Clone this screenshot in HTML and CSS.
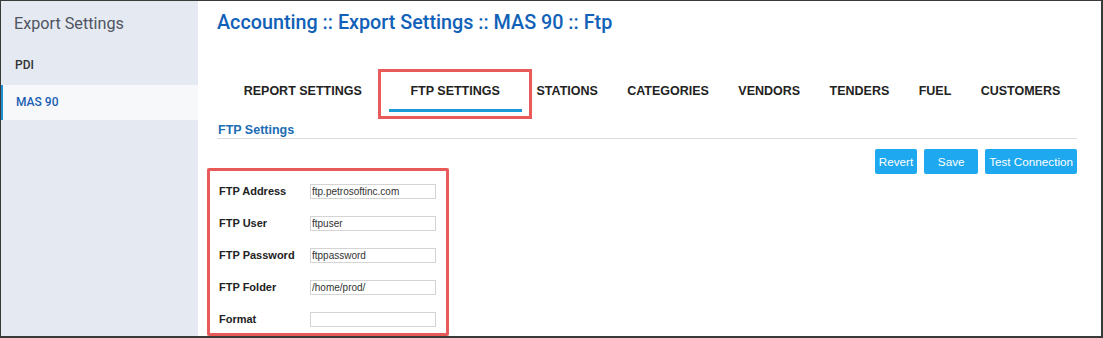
FILE: index.html
```html
<!DOCTYPE html>
<html lang="en">
<head>
  <meta charset="UTF-8">
  <meta name="viewport" content="width=device-width, initial-scale=1.0">
  <title>Export Settings</title>
  <link rel="stylesheet" href="styles.css">
</head>
<body>
  <div class="page">
    <aside class="sidebar">
      <div class="sidebar-title">Export Settings</div>
      <a class="side-item" href="#">PDI</a>
      <a class="side-item side-item--active" href="#">MAS 90</a>
    </aside>

    <main class="main">
      <h1 class="page-title">Accounting :: Export Settings :: MAS 90 :: Ftp</h1>

      <nav class="tabs">
        <a class="tab" href="#">REPORT SETTINGS</a>
        <a class="tab tab--active" href="#">FTP SETTINGS</a>
        <a class="tab" href="#">STATIONS</a>
        <a class="tab" href="#">CATEGORIES</a>
        <a class="tab" href="#">VENDORS</a>
        <a class="tab" href="#">TENDERS</a>
        <a class="tab" href="#">FUEL</a>
        <a class="tab" href="#">CUSTOMERS</a>
      </nav>

      <h2 class="section-title">FTP Settings</h2>

      <div class="actions">
        <button class="btn">Revert</button>
        <button class="btn">Save</button>
        <button class="btn">Test Connection</button>
      </div>

      <form class="ftp-form">
        <div class="form-row">
          <label class="form-label" for="ftp-address">FTP Address</label>
          <input class="form-input" id="ftp-address" type="text" value="ftp.petrosoftinc.com">
        </div>
        <div class="form-row">
          <label class="form-label" for="ftp-user">FTP User</label>
          <input class="form-input" id="ftp-user" type="text" value="ftpuser">
        </div>
        <div class="form-row">
          <label class="form-label" for="ftp-password">FTP Password</label>
          <input class="form-input" id="ftp-password" type="text" value="ftppassword">
        </div>
        <div class="form-row">
          <label class="form-label" for="ftp-folder">FTP Folder</label>
          <input class="form-input" id="ftp-folder" type="text" value="/home/prod/">
        </div>
        <div class="form-row">
          <label class="form-label" for="format">Format</label>
          <input class="form-input" id="format" type="text" value="">
        </div>
      </form>
    </main>
  </div>
</body>
</html>
```

FILE: styles.css
```css
body {
  margin: 0;
  font-family: "Liberation Sans", Arial, sans-serif;
  background-color: #fff;
}

.page {
  display: flex;
  height: 338px;
  box-sizing: border-box;
  border: 1px solid #3a3a3a;
  border-right-width: 2px;
  border-bottom-width: 2px;
  overflow: hidden;
}

/* Left menu */
.sidebar {
  width: 197px;
  flex-shrink: 0;
  background-color: #e5e9f2;
  font-family: Roboto, sans-serif;
}

.sidebar-title {
  height: 47px;
  line-height: 46px;
  padding-left: 13px;
  font-size: 16.2px;
  color: #4f5560;
}

.side-item {
  display: block;
  height: 35px;
  line-height: 35px;
  margin-bottom: 2px;
  padding-left: 14px;
  font-size: 12px;
  font-weight: 500;
  color: #333;
  text-decoration: none;
}

.side-item--active {
  background-color: #f7f8fa;
  border-left: 2px solid #1e90d6;
  padding-left: 13px;
  color: #1a5fb4;
}

/* Main area */
.main {
  flex: 1;
  min-width: 0;
  padding: 0 24px 0 19px;
}

.page-title {
  margin: 9px 0 0;
  font-family: Roboto, sans-serif;
  font-size: 19.75px;
  font-weight: 500;
  line-height: 26px;
  color: #1261b8;
  white-space: nowrap;
}

.tabs {
  display: flex;
  margin-top: 35px;
  padding-left: 12px;
}

.tab {
  display: block;
  flex-shrink: 0;
  white-space: nowrap;
  padding: 12px 14.7px 10px;
  border-bottom: 3px solid transparent;
  font-size: 12.5px;
  font-weight: bold;
  line-height: 16px;
  color: #222;
  text-decoration: none;
}

.tab--active {
  position: relative;
  margin-left: 13px;
  padding-left: 21px;
  padding-right: 22px;
  border-bottom-color: #1a9bd7;
}

/* red highlight round the selected tab */
.tab--active::after {
  content: "";
  position: absolute;
  left: -11px;
  right: -10px;
  top: -2px;
  bottom: -10px;
  border: 3px solid #e95b5b;
}

.section-title {
  margin: 10px 0 0;
  padding-left: 1px;
  font-size: 12.5px;
  font-weight: bold;
  line-height: 16px;
  color: #1b6db5;
  border-bottom: 1px solid #dcdcdc;
}

.actions {
  display: flex;
  justify-content: flex-end;
  gap: 7px;
  margin-top: 10px;
}

.btn {
  height: 25px;
  min-width: 54px;
  padding: 0 4px;
  border: none;
  border-radius: 2px;
  background-color: #1ea8ef;
  color: #fff;
  font-family: "Liberation Sans", Arial, sans-serif;
  font-size: 11.7px;
  white-space: nowrap;
  cursor: pointer;
}

.btn:first-child {
  min-width: 41px;
}

.ftp-form {
  position: relative;
  margin: 1px 0 0;
  padding-left: 2px;
}

/* red highlight round the form */
.ftp-form::after {
  content: "";
  position: absolute;
  left: -10px;
  top: -7px;
  width: 242px;
  bottom: -1px;
  box-sizing: border-box;
  border: 3px solid #e95b5b;
  border-radius: 2px;
}

.form-row {
  display: flex;
  align-items: center;
  height: 32px;
}

.form-label {
  width: 91px;
  font-size: 11px;
  font-weight: bold;
  color: #222;
}

.form-input {
  width: 126px;
  height: 15px;
  box-sizing: border-box;
  padding: 0 1px;
  margin: 0;
  border: 1px solid #d4d4d4;
  font-family: "Liberation Sans", Arial, sans-serif;
  font-size: 10px;
  color: #333;
  outline: none;
}
```
